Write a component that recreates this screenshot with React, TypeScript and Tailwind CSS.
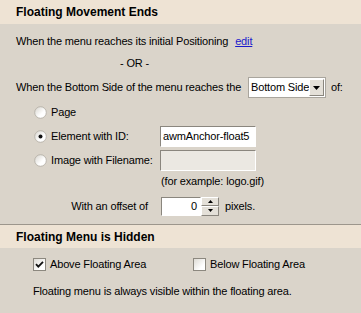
import React from "react";

const font = { fontFamily: '"Liberation Sans", Arial, sans-serif' };

function Radio({ checked }: { checked?: boolean }) {
  return (
    <svg width="13" height="13" viewBox="0 0 13 13" className="shrink-0">
      <defs>
        <linearGradient id="rg" x1="0" y1="0" x2="1" y2="1">
          <stop offset="0" stopColor="#d6d3cc" />
          <stop offset="0.6" stopColor="#ffffff" />
          <stop offset="1" stopColor="#ffffff" />
        </linearGradient>
      </defs>
      <circle cx="6.5" cy="6.5" r="5.8" fill="url(#rg)" stroke="#b5b1a8" strokeWidth="0.9" />
      {checked && <circle cx="6.5" cy="6.5" r="2" fill="#111" />}
    </svg>
  );
}

function Check({ checked }: { checked?: boolean }) {
  return (
    <svg width="13" height="13" viewBox="0 0 13 13" className="shrink-0">
      <defs>
        <linearGradient id="cg" x1="0" y1="0" x2="1" y2="1">
          <stop offset="0" stopColor="#dcd9d2" />
          <stop offset="0.7" stopColor="#ffffff" />
        </linearGradient>
      </defs>
      <rect x="0.5" y="0.5" width="12" height="12" fill="url(#cg)" stroke="#8c887f" />
      {checked && (
        <path d="M3 6.2 L5.3 8.6 L10 3.8" fill="none" stroke="#111" strokeWidth="1.8" />
      )}
    </svg>
  );
}

export default function App() {
  return (
    <div className="w-[361px] h-[313px] bg-[#dad4ca] text-[11px] tracking-[-0.15px] text-black overflow-hidden flex flex-col whitespace-nowrap" style={font}>
      <div className="h-[24px] shrink-0 bg-[#eee3d4] flex items-center pl-[16px] text-[12px] tracking-normal font-bold">
        Floating Movement Ends
      </div>
      <div className="flex flex-col pt-[6px]">
        <div className="h-[22px] flex items-center pl-[16px]">
          <span>When the menu reaches its initial Positioning</span>
          <span className="ml-[7px] text-[#1a1acc] underline">edit</span>
        </div>
        <div className="h-[23px] flex items-center pl-[120px]">- OR -</div>
        <div className="h-[25px] flex items-center pl-[16px]">
          <span className="w-[232px]">When the Bottom Side of the menu reaches the</span>
          <div className="w-[78px] h-[21px] bg-white border border-[#a9a59d] flex items-center">
            <span className="pl-[2px] flex-1">Bottom Side</span>
            <div className="w-[15px] h-[17px] mr-[1px] bg-[#e4e0d8] border border-t-white border-l-white border-r-[#8a867e] border-b-[#8a867e] flex items-center justify-center">
              <svg width="7" height="4" viewBox="0 0 7 4"><path d="M0 0H7L3.5 4Z" fill="#000" /></svg>
            </div>
          </div>
          <span className="ml-[5px]">of:</span>
        </div>
        <div className="h-[24px] flex items-center pl-[34px] gap-[4px]">
          <Radio />
          <span>Page</span>
        </div>
        <div className="h-[24px] flex items-center pl-[34px]">
          <Radio checked />
          <span className="ml-[4px] w-[109px]">Element with ID:</span>
          <div className="w-[96px] h-[21px] bg-white border border-t-[#8a867e] border-l-[#8a867e] border-b-white border-r-white flex items-center pl-[2px]">
            awmAnchor-float5
          </div>
        </div>
        <div className="h-[24px] flex items-center pl-[34px]">
          <Radio />
          <span className="ml-[4px] w-[109px]">Image with Filename:</span>
          <div className="w-[96px] h-[21px] bg-[#ebe8e2] border border-t-[#8a867e] border-l-[#8a867e] border-b-white border-r-white" />
        </div>
        <div className="h-[18px] flex items-center pl-[161px]">(for example: logo.gif)</div>
        <div className="h-[32px] flex items-center">
          <span className="w-[161px] text-right pr-[13px]">With an offset of</span>
          <div className="w-[40px] h-[19px] bg-white border border-t-[#8a867e] border-l-[#8a867e] border-b-white border-r-white flex items-center justify-end pr-[3px]">
            0
          </div>
          <div className="w-[18px] h-[19px] flex flex-col">
            <div className="h-[9px] bg-[#e4e0d8] border border-t-white border-l-white border-r-[#8a867e] border-b-[#8a867e] flex items-center justify-center">
              <svg width="5" height="3" viewBox="0 0 5 3"><path d="M0 3H5L2.5 0Z" fill="#000" /></svg>
            </div>
            <div className="h-[10px] bg-[#e4e0d8] border border-t-white border-l-white border-r-[#8a867e] border-b-[#8a867e] flex items-center justify-center">
              <svg width="5" height="3" viewBox="0 0 5 3"><path d="M0 0H5L2.5 3Z" fill="#000" /></svg>
            </div>
          </div>
          <span className="ml-[6px]">pixels.</span>
        </div>
        <div className="h-[2px]" />
        <div className="h-[1px] bg-[#9c968c]" />
        <div className="h-[23px] bg-[#eee3d4] flex items-center pl-[16px] text-[12px] tracking-normal font-bold">
          Floating Menu is Hidden
        </div>
        <div className="h-[32px] flex items-center pl-[33px]">
          <Check checked />
          <span className="ml-[4px] w-[143px]">Above Floating Area</span>
          <Check />
          <span className="ml-[4px]">Below Floating Area</span>
        </div>
        <div className="h-[22px] flex items-center pl-[33px]">
          Floating menu is always visible within the floating area.
        </div>
      </div>
    </div>
  );
}
